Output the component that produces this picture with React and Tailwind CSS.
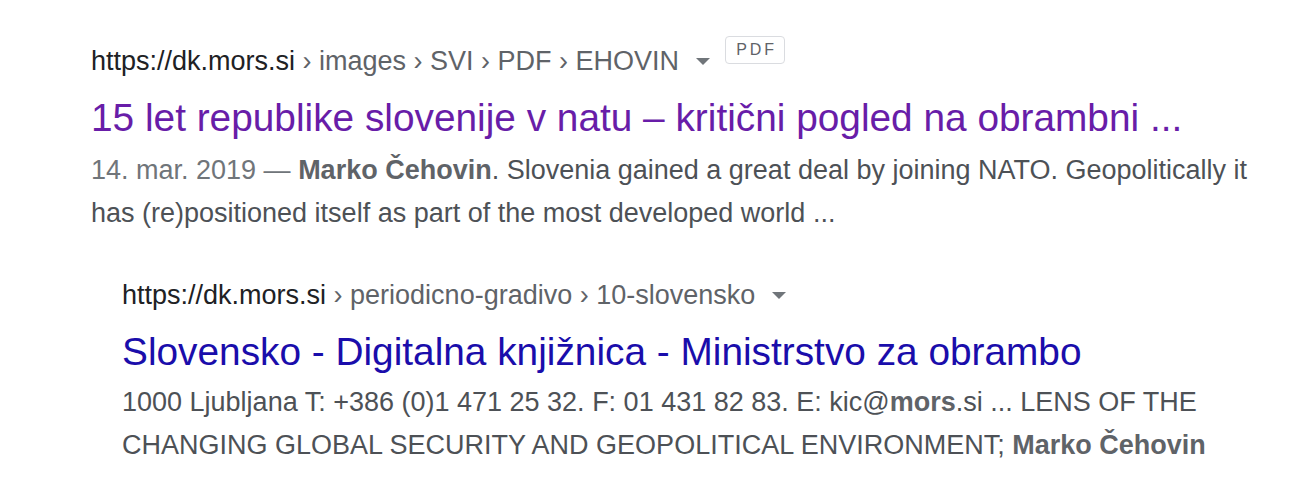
import React from 'react';

const results = [
  {
    indent: false,
    crumbs: ['images', 'SVI', 'PDF', 'EHOVIN'],
    pdf: true,
    title: '15 let republike slovenije v natu – kritični pogled na obrambni ...',
    visited: true,
  },
  {
    indent: true,
    crumbs: ['periodicno-gradivo', '10-slovensko'],
    pdf: false,
    title: 'Slovensko - Digitalna knjižnica - Ministrstvo za obrambo',
    visited: false,
  },
];

function Caret() {
  return (
    <svg width="14" height="7" viewBox="0 0 14 7" className="ml-[17px] shrink-0">
      <path d="M0 0 L14 0 L7 7 Z" fill="#70757a" />
    </svg>
  );
}

function UrlLine({ crumbs, pdf }) {
  return (
    <div className="flex items-center h-9 text-[27px] leading-9 whitespace-pre">
      <span className="text-[#202124]">https://dk.mors.si</span>
      <span className="text-[#5f6368]">{crumbs.map((c) => ' › ' + c).join('')}</span>
      <Caret />
      {pdf && (
        <span className="ml-[15px] self-start -mt-[7px] h-7 w-[60px] flex items-center justify-center pl-[3px] border border-[#dadce0] rounded-[4px] text-[16px] leading-none tracking-[3px] text-[#5f6368]">
          PDF
        </span>
      )}
    </div>
  );
}

function Result({ r, children }) {
  return (
    <div className={r.indent ? 'ml-[31px] mt-[42px]' : ''}>
      <UrlLine crumbs={r.crumbs} pdf={r.pdf} />
      <h3
        className={`mt-[17px] text-[38.8px] leading-[44px] whitespace-nowrap ${
          r.visited ? 'text-[#681da8]' : 'text-[#1a0dab]'
        }`}
      >
        {r.title}
      </h3>
      <div className={`${r.indent ? 'mt-[7px]' : 'mt-[9px]'} text-[27px] leading-[43px] text-[#4d5156]`}>
        {children}
      </div>
    </div>
  );
}

export default function App() {
  return (
    <div
      className="min-h-screen bg-white pl-[91px] pt-[43px]"
      style={{ fontFamily: '"Liberation Sans", Arial, sans-serif' }}
    >
      <div className="w-[1180px]">
        <Result r={results[0]}>
          <span className="text-[#70757a]">14. mar. 2019 — </span>
          <b className="text-[#5f6368]">Marko Čehovin</b>. Slovenia gained a great deal by joining NATO.
          Geopolitically it has (re)positioned itself as part of the most developed world ...
        </Result>
        <Result r={results[1]}>
          1000 Ljubljana T: +386 (0)1 471 25 32. F: 01 431 82 83. E: kic@<b className="text-[#5f6368]">mors</b>.si
          ... LENS OF THE CHANGING GLOBAL SECURITY AND GEOPOLITICAL ENVIRONMENT;{' '}
          <b className="text-[#5f6368]">Marko Čehovin</b>
        </Result>
      </div>
    </div>
  );
}
